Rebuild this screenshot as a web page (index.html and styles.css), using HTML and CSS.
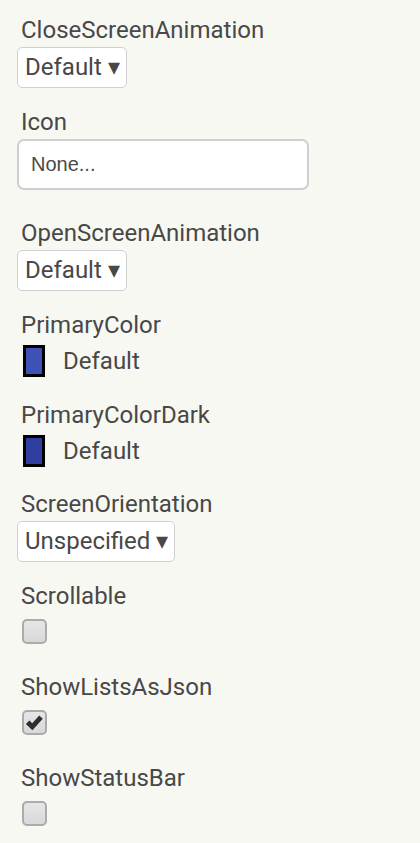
FILE: index.html
```html
<!DOCTYPE html>
<html>
<head>
<meta charset="utf-8">
<link rel="stylesheet" href="styles.css">
</head>
<body>
<div class="panel">
  <div class="prop p-close">
    <div class="label">CloseScreenAnimation</div>
    <div class="select">Default ▾</div>
  </div>
  <div class="prop p-icon">
    <div class="label">Icon</div>
    <div class="textbox">None...</div>
  </div>
  <div class="prop p-open">
    <div class="label">OpenScreenAnimation</div>
    <div class="select">Default ▾</div>
  </div>
  <div class="prop p-color p-color1">
    <div class="label">PrimaryColor</div>
    <div class="color-row"><span class="swatch swatch-primary"></span><span class="color-name">Default</span></div>
  </div>
  <div class="prop p-color p-color2">
    <div class="label">PrimaryColorDark</div>
    <div class="color-row"><span class="swatch swatch-dark"></span><span class="color-name">Default</span></div>
  </div>
  <div class="prop p-orient">
    <div class="label">ScreenOrientation</div>
    <div class="select">Unspecified ▾</div>
  </div>
  <div class="prop p-check">
    <div class="label">Scrollable</div>
    <span class="checkbox"></span>
  </div>
  <div class="prop p-check">
    <div class="label">ShowListsAsJson</div>
    <span class="checkbox checked"><svg viewBox="0 0 24 24" width="22" height="22"><path d="M2.2 13 L6.2 9.2 L9.4 12.4 L17.4 3.4 L21.5 7 L9.6 20.2 Z" fill="#2e2e2e"/></svg></span>
  </div>
  <div class="prop p-check">
    <div class="label">ShowStatusBar</div>
    <span class="checkbox"></span>
  </div>
</div>
</body>
</html>
```

FILE: styles.css
```css
html, body {
  margin: 0;
  padding: 0;
  background: #f8f8f3;
}
.panel {
  padding: 17px 0 0 17px;
  font-family: Roboto, "Liberation Sans", sans-serif;
  color: #484848;
}
.prop {
  display: flex;
  flex-direction: column;
  align-items: flex-start;
}
.label {
  font-size: 24px;
  line-height: 27px;
  padding-left: 4px;
  color: #484848;
}
.select {
  margin-top: 3px;
  box-sizing: border-box;
  height: 41px;
  border: 1px solid #d0d0d0;
  border-radius: 5px;
  background: #fff;
  font-size: 24px;
  line-height: 39px;
  padding: 0 6px 0 7px;
  color: #484848;
}
.p-close { margin-bottom: 21px; }
.p-icon { margin-bottom: 30px; }
.p-open { margin-bottom: 21px; }
.p-orient .select { margin-top: 3px; }
.p-orient { margin-bottom: 21px; }
.textbox {
  margin-top: 3px;
  width: 292px;
  height: 51px;
  box-sizing: border-box;
  border: 2px solid #cfcfcf;
  border-radius: 7px;
  background: #fff;
  font-family: "Liberation Sans", Arial, sans-serif;
  font-size: 20px;
  line-height: 47px;
  padding-left: 12px;
  color: #4a4a4a;
}
.p-color1 { margin-bottom: 25px; }
.p-color2 { margin-bottom: 24px; }
.color-row {
  margin-top: 6px;
  display: flex;
  align-items: center;
  padding-left: 6px;
}
.swatch {
  width: 22px;
  height: 32px;
  box-sizing: border-box;
  border: 3px solid #000;
}
.swatch-primary { background: #3f51b5; }
.swatch-dark { background: #303f9f; }
.color-name {
  margin-left: 18px;
  font-size: 24px;
  line-height: 32px;
  color: #484848;
}
.p-check { margin-bottom: 30px; }
.checkbox {
  margin-top: 9px;
  margin-left: 5px;
  width: 25px;
  height: 25px;
  box-sizing: border-box;
  border: 2px solid #ababab;
  border-radius: 5px;
  background: linear-gradient(#e6e6e6, #d8d8d8);
  display: flex;
  align-items: center;
  justify-content: center;
}
.checkbox svg { display: block; }
```
